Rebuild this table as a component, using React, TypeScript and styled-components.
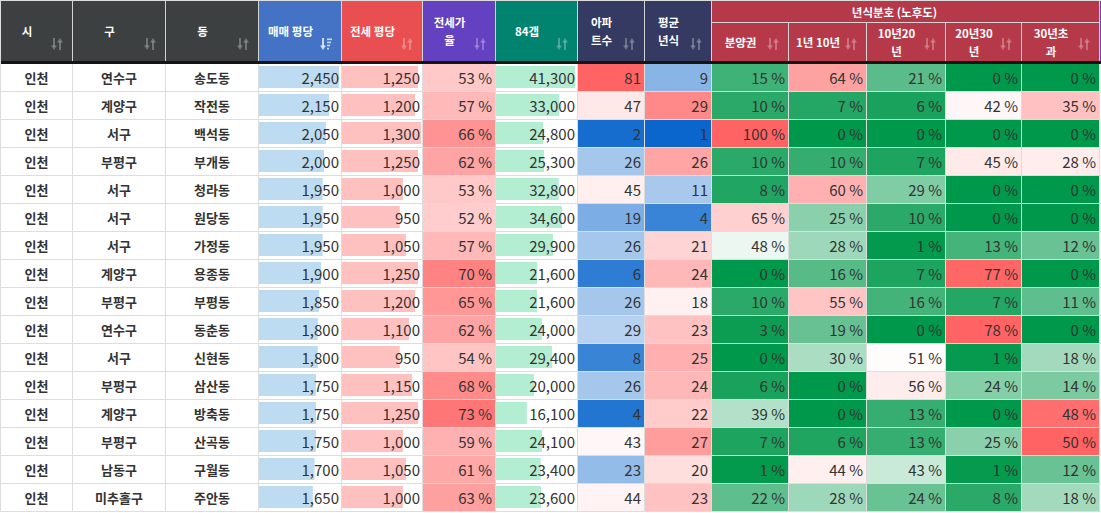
import React from "react";
import styled, { createGlobalStyle } from "styled-components";

const GlobalStyle = createGlobalStyle`
  html, body {
    margin: 0;
    padding: 0;
    background: #fff;
    overflow: hidden;
  }
  body {
    font-family: "Noto Sans CJK KR", "Noto Sans", sans-serif;
    color: #333;
  }
`;

// column widths incl. right border
const COLS = [72, 93, 93, 83, 81, 73, 82, 67, 67, 77, 78, 79, 76, 78, 80];
const TEMPLATE = COLS.map((w) => `${w}px`).join(" ");

const TONES = {
  dark: "#3c4041",
  blue: "#4472c4",
  red: "#e94f50",
  purple: "#6441c0",
  teal: "#00836f",
  navy: "#343a62",
  crimson: "#b6394a",
};
type Tone = keyof typeof TONES;

type RGB = [number, number, number];
const WHITE: RGB = [255, 255, 255];
const GREEN: RGB = [0, 152, 74];
const RED: RGB = [255, 99, 99];
const BLUE: RGB = [10, 102, 204];

const mix = (a: RGB, b: RGB, t: number) => {
  const k = Math.max(0, Math.min(1, t));
  const c = a.map((v, i) => Math.round(v + (b[i] - v) * k));
  return `rgb(${c[0]}, ${c[1]}, ${c[2]})`;
};

const diverge = (v: number, min: number, mid: number, max: number, low: RGB, high: RGB, curve = 1) =>
  v <= mid
    ? mix(WHITE, low, Math.pow((mid - v) / (mid - min), curve))
    : mix(WHITE, high, (v - mid) / (max - mid));

type Row = [string, string, string, number, number, number, number, number, number, number, number, number, number, number];

const ROWS: Row[] = [
  ["인천", "연수구", "송도동", 2450, 1250, 53, 41300, 81, 9, 15, 64, 21, 0, 0],
  ["인천", "계양구", "작전동", 2150, 1200, 57, 33000, 47, 29, 10, 7, 6, 42, 35],
  ["인천", "서구", "백석동", 2050, 1300, 66, 24800, 2, 1, 100, 0, 0, 0, 0],
  ["인천", "부평구", "부개동", 2000, 1250, 62, 25300, 26, 26, 10, 10, 7, 45, 28],
  ["인천", "서구", "청라동", 1950, 1000, 53, 32800, 45, 11, 8, 60, 29, 0, 0],
  ["인천", "서구", "원당동", 1950, 950, 52, 34600, 19, 4, 65, 25, 10, 0, 0],
  ["인천", "서구", "가정동", 1950, 1050, 57, 29900, 26, 21, 48, 28, 1, 13, 12],
  ["인천", "계양구", "용종동", 1900, 1250, 70, 21600, 6, 24, 0, 16, 7, 77, 0],
  ["인천", "부평구", "부평동", 1850, 1200, 65, 21600, 26, 18, 10, 55, 16, 7, 11],
  ["인천", "연수구", "동춘동", 1800, 1100, 62, 24000, 29, 23, 3, 19, 0, 78, 0],
  ["인천", "서구", "신현동", 1800, 950, 54, 29400, 8, 25, 0, 30, 51, 1, 18],
  ["인천", "부평구", "삼산동", 1750, 1150, 68, 20000, 26, 24, 6, 0, 56, 24, 14],
  ["인천", "계양구", "방축동", 1750, 1250, 73, 16100, 4, 22, 39, 0, 13, 0, 48],
  ["인천", "부평구", "산곡동", 1750, 1000, 59, 24100, 43, 27, 7, 6, 13, 25, 50],
  ["인천", "남동구", "구월동", 1700, 1050, 61, 23400, 23, 20, 1, 44, 43, 1, 12],
  ["인천", "미추홀구", "주안동", 1650, 1000, 63, 23600, 44, 23, 22, 28, 24, 8, 18],
];

// [mid, max] per age bucket column (min is 0)
const AGE_SCALES: [number, number][] = [
  [50, 100],
  [40, 80],
  [50, 100],
  [40, 78],
  [25, 50],
];

const Page = styled.div`
  width: 100vw;
  height: 513px;
  overflow: hidden;
`;

const Table = styled.div`
  width: ${COLS.reduce((a, b) => a + b, 0) + 1}px;
  border-left: 1px solid #ddd;
`;

const Head = styled.div`
  display: grid;
  grid-template-columns: ${TEMPLATE};
  grid-template-rows: 22px 38px;
  border-top: 1px solid #ddd;
  border-bottom: 3px solid #151515;
`;

const HeadCell = styled.div<{ $tone: Tone; $col: number; $tall?: boolean }>`
  grid-column: ${(p) => p.$col};
  grid-row: ${(p) => (p.$tall ? "1 / span 2" : "2")};
  background: ${(p) => TONES[p.$tone]};
  border-right: 1px solid #d4d4d4;
  display: grid;
  grid-template-columns: 1fr 12px;
  column-gap: 2px;
  padding: 0 9px 0 4px;
  color: #fff;
`;

const HeadLabel = styled.span`
  align-self: center;
  text-align: center;
  font-size: 11.5px;
  font-weight: 700;
  line-height: 18px;
`;

const GroupCell = styled.div`
  grid-column: 10 / span 5;
  grid-row: 1;
  background: ${TONES.crimson};
  border-right: 1px solid #d4d4d4;
  border-bottom: 1px solid #d4d4d4;
  display: flex;
  align-items: center;
  justify-content: center;
  padding-right: 22px;
  color: #fff;
  font-size: 11.5px;
  font-weight: 700;
`;

const SortGlyph = styled.svg<{ $active?: boolean }>`
  align-self: end;
  margin-bottom: 11px;
  width: 12px;
  height: 12px;
  color: ${(p) => (p.$active ? "rgba(255,255,255,0.72)" : "rgba(255,255,255,0.28)")};
`;

function SortIcon({ active }: { active?: boolean }) {
  return (
    <SortGlyph viewBox="0 0 12 12" $active={active}>
      <path d="M3 0v8.5" stroke="currentColor" strokeWidth="2" />
      <path d="M0 7.5h6L3 12z" fill="currentColor" />
      {active ? (
        <>
          <rect x="7" y="0.5" width="5" height="1.6" fill="currentColor" />
          <rect x="7" y="3.6" width="4" height="1.6" fill="currentColor" />
          <rect x="7" y="6.7" width="3" height="1.6" fill="currentColor" />
          <rect x="7" y="9.8" width="2" height="1.6" fill="currentColor" />
        </>
      ) : (
        <>
          <path d="M9 12V3.5" stroke="currentColor" strokeWidth="2" />
          <path d="M6 4.5h6L9 0z" fill="currentColor" />
        </>
      )}
    </SortGlyph>
  );
}

const BodyRow = styled.div`
  display: grid;
  grid-template-columns: ${TEMPLATE};
  height: 28px;
`;

const Cell = styled.div`
  border-right: 1px solid #ddd;
  border-bottom: 1px solid #ddd;
  line-height: 27px;
  white-space: nowrap;
  overflow: hidden;
  color: #333;
`;

const NameCell = styled(Cell)`
  text-align: center;
  font-size: 13px;
  font-weight: 700;
`;

const BarCell = styled(Cell)<{ $bar: string }>`
  text-align: right;
  padding-right: 2px;
  font-size: 15px;
  background-image: linear-gradient(${(p) => p.$bar}, ${(p) => p.$bar});
  background-repeat: no-repeat;
  background-position: 0 2px;
`;

const HeatCell = styled(Cell)`
  text-align: right;
  padding-right: 3px;
  font-size: 15px;
`;

const EmptyCell = styled(Cell)``;

const fmt = (n: number) => n.toLocaleString("en-US");

type HeadDef = { label: React.ReactNode; tone: Tone; active?: boolean };

const MAIN_HEADS: HeadDef[] = [
  { label: "시", tone: "dark" },
  { label: "구", tone: "dark" },
  { label: "동", tone: "dark" },
  { label: "매매 평당", tone: "blue", active: true },
  { label: "전세 평당", tone: "red" },
  { label: <>전세가<br />율</>, tone: "purple" },
  { label: "84갭", tone: "teal" },
  { label: <>아파<br />트수</>, tone: "navy" },
  { label: <>평균<br />년식</>, tone: "navy" },
];

const AGE_HEADS: React.ReactNode[] = [
  "분양권",
  "1년 10년",
  <>10년20<br />년</>,
  <>20년30<br />년</>,
  <>30년초<br />과</>,
];

function Bar({ value, max, color }: { value: number; max: number; color: string }) {
  return (
    <BarCell $bar={color} style={{ backgroundSize: `${(value / max) * 100}% 22px` }}>
      {fmt(value)}
    </BarCell>
  );
}

export default function App() {
  return (
    <>
      <GlobalStyle />
      <Page>
        <Table>
          <Head>
            {MAIN_HEADS.map((h, i) => (
              <HeadCell key={i} $tone={h.tone} $col={i + 1} $tall>
                <HeadLabel>{h.label}</HeadLabel>
                <SortIcon active={h.active} />
              </HeadCell>
            ))}
            <GroupCell>년식분호 (노후도)</GroupCell>
            {AGE_HEADS.map((label, i) => (
              <HeadCell key={`a${i}`} $tone="crimson" $col={10 + i}>
                <HeadLabel>{label}</HeadLabel>
                <SortIcon />
              </HeadCell>
            ))}
            <HeadCell $tone="purple" $col={15} $tall />
          </Head>

          {ROWS.map((r, i) => {
            const [si, gu, dong, buy, rent, ratio, gap, apts, age, ...buckets] = r;
            return (
              <BodyRow key={i}>
                <NameCell>{si}</NameCell>
                <NameCell>{gu}</NameCell>
                <NameCell>{dong}</NameCell>
                <Bar value={buy} max={2510} color="#bddcf1" />
                <Bar value={rent} max={1315} color="#ffc0c0" />
                <HeatCell style={{ background: mix(WHITE, [255, 110, 110], (ratio - 40) / 35) }}>
                  {ratio} %
                </HeatCell>
                <Bar value={gap} max={42350} color="#b3edd2" />
                <HeatCell style={{ background: diverge(apts, 0, 41, 81, BLUE, RED) }}>{apts}</HeatCell>
                <HeatCell style={{ background: diverge(age, 1, 16.5, 33, BLUE, RED) }}>{age}</HeatCell>
                {buckets.map((b, j) => (
                  <HeatCell
                    key={j}
                    style={{
                      background: diverge(b, 0, AGE_SCALES[j][0], AGE_SCALES[j][1], GREEN, RED, 0.8),
                    }}
                  >
                    {b} %
                  </HeatCell>
                ))}
                <EmptyCell />
              </BodyRow>
            );
          })}
        </Table>
      </Page>
    </>
  );
}
